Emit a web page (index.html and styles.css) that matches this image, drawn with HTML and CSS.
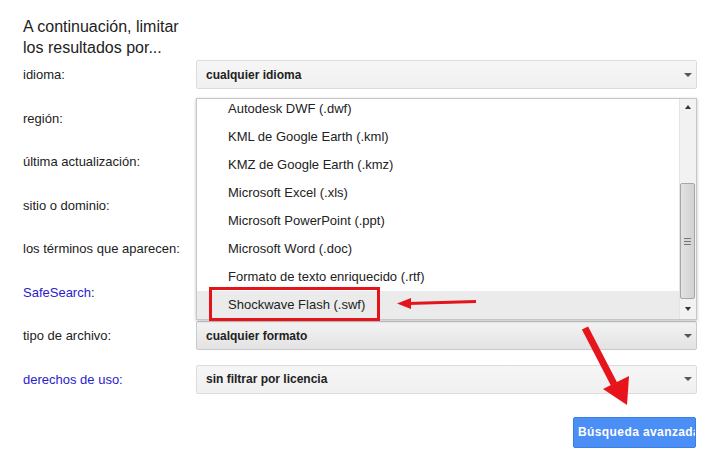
FILE: index.html
```html
<!DOCTYPE html>
<html lang="es">
<head>
<meta charset="utf-8">
<title>Búsqueda avanzada</title>
<link rel="stylesheet" href="styles.css">
</head>
<body>
<div class="page">
  <h2 class="title">A continuación, limitar<br>los resultados por...</h2>
  <div class="form">
    <div class="row"><div class="label">idioma:</div><div class="select"><span>cualquier idioma</span><i class="caret"></i></div></div>
    <div class="row"><div class="label">región:</div><div class="select"><i class="caret"></i></div></div>
    <div class="row"><div class="label">última actualización:</div><div class="select"><i class="caret"></i></div></div>
    <div class="row"><div class="label">sitio o dominio:</div><div class="select"></div></div>
    <div class="row"><div class="label">los términos que aparecen:</div><div class="select"><i class="caret"></i></div></div>
    <div class="row"><div class="label"><span class="link">SafeSearch</span>:</div><div class="select"><i class="caret"></i></div></div>
    <div class="row"><div class="label">tipo de archivo:</div><div class="select active"><span>cualquier formato</span><i class="caret"></i></div></div>
    <div class="row"><div class="label link">derechos de uso:</div><div class="select"><span>sin filtrar por licencia</span><i class="caret"></i></div></div>

    <div class="listbox">
      <ul class="opts">
        <li>Autodesk DWF (.dwf)</li>
        <li>KML de Google Earth (.kml)</li>
        <li>KMZ de Google Earth (.kmz)</li>
        <li>Microsoft Excel (.xls)</li>
        <li>Microsoft PowerPoint (.ppt)</li>
        <li>Microsoft Word (.doc)</li>
        <li>Formato de texto enriquecido (.rtf)</li>
        <li class="hover">Shockwave Flash (.swf)</li>
      </ul>
      <div class="scroll">
        <div class="sbtn"><i class="up"></i></div>
        <div class="track"><div class="thumb"><i class="grip"></i></div></div>
        <div class="sbtn down-btn"><i class="down"></i></div>
      </div>
    </div>
  </div>
  <div class="actions"><div class="btn">Búsqueda avanzada</div></div>

  <svg class="marks" width="715" height="452" viewBox="0 0 715 452">
    <rect x="210.5" y="288.5" width="168" height="31" fill="none" stroke="#e3141b" stroke-width="3"/>
    <line x1="476" y1="301.5" x2="408" y2="303.5" stroke="#e3141b" stroke-width="3"/>
    <polygon points="397,303.5 411,298 411,309" fill="#e3141b"/>
    <line x1="585" y1="328" x2="614" y2="384" stroke="#e8141b" stroke-width="7"/>
    <polygon points="627,405 603,389 629,376" fill="#e8141b"/>
  </svg>
</div>
</body>
</html>
```

FILE: styles.css
```css
html, body {
  margin: 0;
  padding: 0;
  background: #fff;
  overflow: hidden;
}

.page {
  position: relative;
  width: 715px;
  height: 452px;
  box-sizing: border-box;
  padding: 16px 18px 0 23px;
  font-family: "Liberation Sans", Arial, sans-serif;
  color: #222;
}

.title {
  margin: 0 0 2px;
  font-size: 16px;
  line-height: 21px;
  font-weight: normal;
  color: #222;
}

.form {
  position: relative;
  width: 674px;
  display: flex;
  flex-direction: column;
  gap: 14.5px;
}

.row {
  display: grid;
  grid-template-columns: 173px 1fr;
  align-items: center;
  height: 29px;
}

.label {
  font-size: 13px;
  color: #222;
  white-space: nowrap;
}

.link {
  color: #2a1bcc;
}

.select {
  height: 29px;
  box-sizing: border-box;
  display: flex;
  align-items: center;
  padding: 0 4px 0 9px;
  border: 1px solid #dcdcdc;
  border-radius: 2px;
  background: linear-gradient(#f6f6f6, #f0f0f0);
  font-size: 12px;
  font-weight: bold;
  color: #222;
}

.select.active {
  border-color: #c9c9c9;
  background: linear-gradient(#f3f3f3, #e3e3e3);
}

.caret {
  margin-left: auto;
  width: 0;
  height: 0;
  border-left: 4px solid transparent;
  border-right: 4px solid transparent;
  border-top: 4px solid #555;
}

.listbox {
  position: absolute;
  left: 173px;
  right: 0;
  top: 38px;
  height: 222px;
  box-sizing: border-box;
  border: 1px solid #c6c6c6;
  background: #fff;
  box-shadow: 0 1px 3px rgba(0, 0, 0, 0.25);
  display: flex;
  overflow: hidden;
}

.opts {
  flex: 1;
  list-style: none;
  margin: -4px 0 0;
  padding: 0;
}

.opts li {
  height: 28px;
  line-height: 28px;
  padding-left: 31px;
  font-size: 13px;
  color: #222;
  white-space: nowrap;
}

.opts li.hover {
  background: #ebebeb;
}

.scroll {
  width: 17px;
  box-sizing: border-box;
  border-left: 1px solid #e4e4e4;
  background: #f2f2f2;
  display: flex;
  flex-direction: column;
}

.sbtn {
  height: 16px;
  display: flex;
  align-items: center;
  justify-content: center;
}

.down-btn {
  height: 20px;
}

.up, .down {
  width: 0;
  height: 0;
  border-left: 3.5px solid transparent;
  border-right: 3.5px solid transparent;
}

.up {
  border-bottom: 4px solid #333;
}

.down {
  border-top: 4px solid #333;
}

.track {
  flex: 1;
  display: flex;
  flex-direction: column;
  justify-content: flex-end;
}

.thumb {
  height: 116px;
  width: 15px;
  box-sizing: border-box;
  border: 1px solid #a6a6a6;
  border-radius: 2px;
  background: linear-gradient(to right, #e2e2e2, #d2d2d2);
  display: flex;
  align-items: center;
  justify-content: center;
}

.grip {
  width: 7px;
  height: 5px;
  border-top: 1px solid #777;
  border-bottom: 1px solid #777;
  background: linear-gradient(#d6d6d6 2px, #777 2px, #777 3px, #d6d6d6 3px);
}

.actions {
  width: 674px;
  display: flex;
  justify-content: flex-end;
  margin-top: 23.5px;
}

.btn {
  width: 123px;
  height: 31px;
  margin-right: 1px;
  box-sizing: border-box;
  border: 1px solid #3a7ee8;
  border-radius: 2px;
  background: #4a8ef6;
  color: #fff;
  font-size: 12px;
  font-weight: bold;
  letter-spacing: 0.4px;
  line-height: 29px;
  padding-left: 4px;
  white-space: nowrap;
  overflow: hidden;
}

.marks {
  position: absolute;
  left: 0;
  top: 0;
  pointer-events: none;
}
```
